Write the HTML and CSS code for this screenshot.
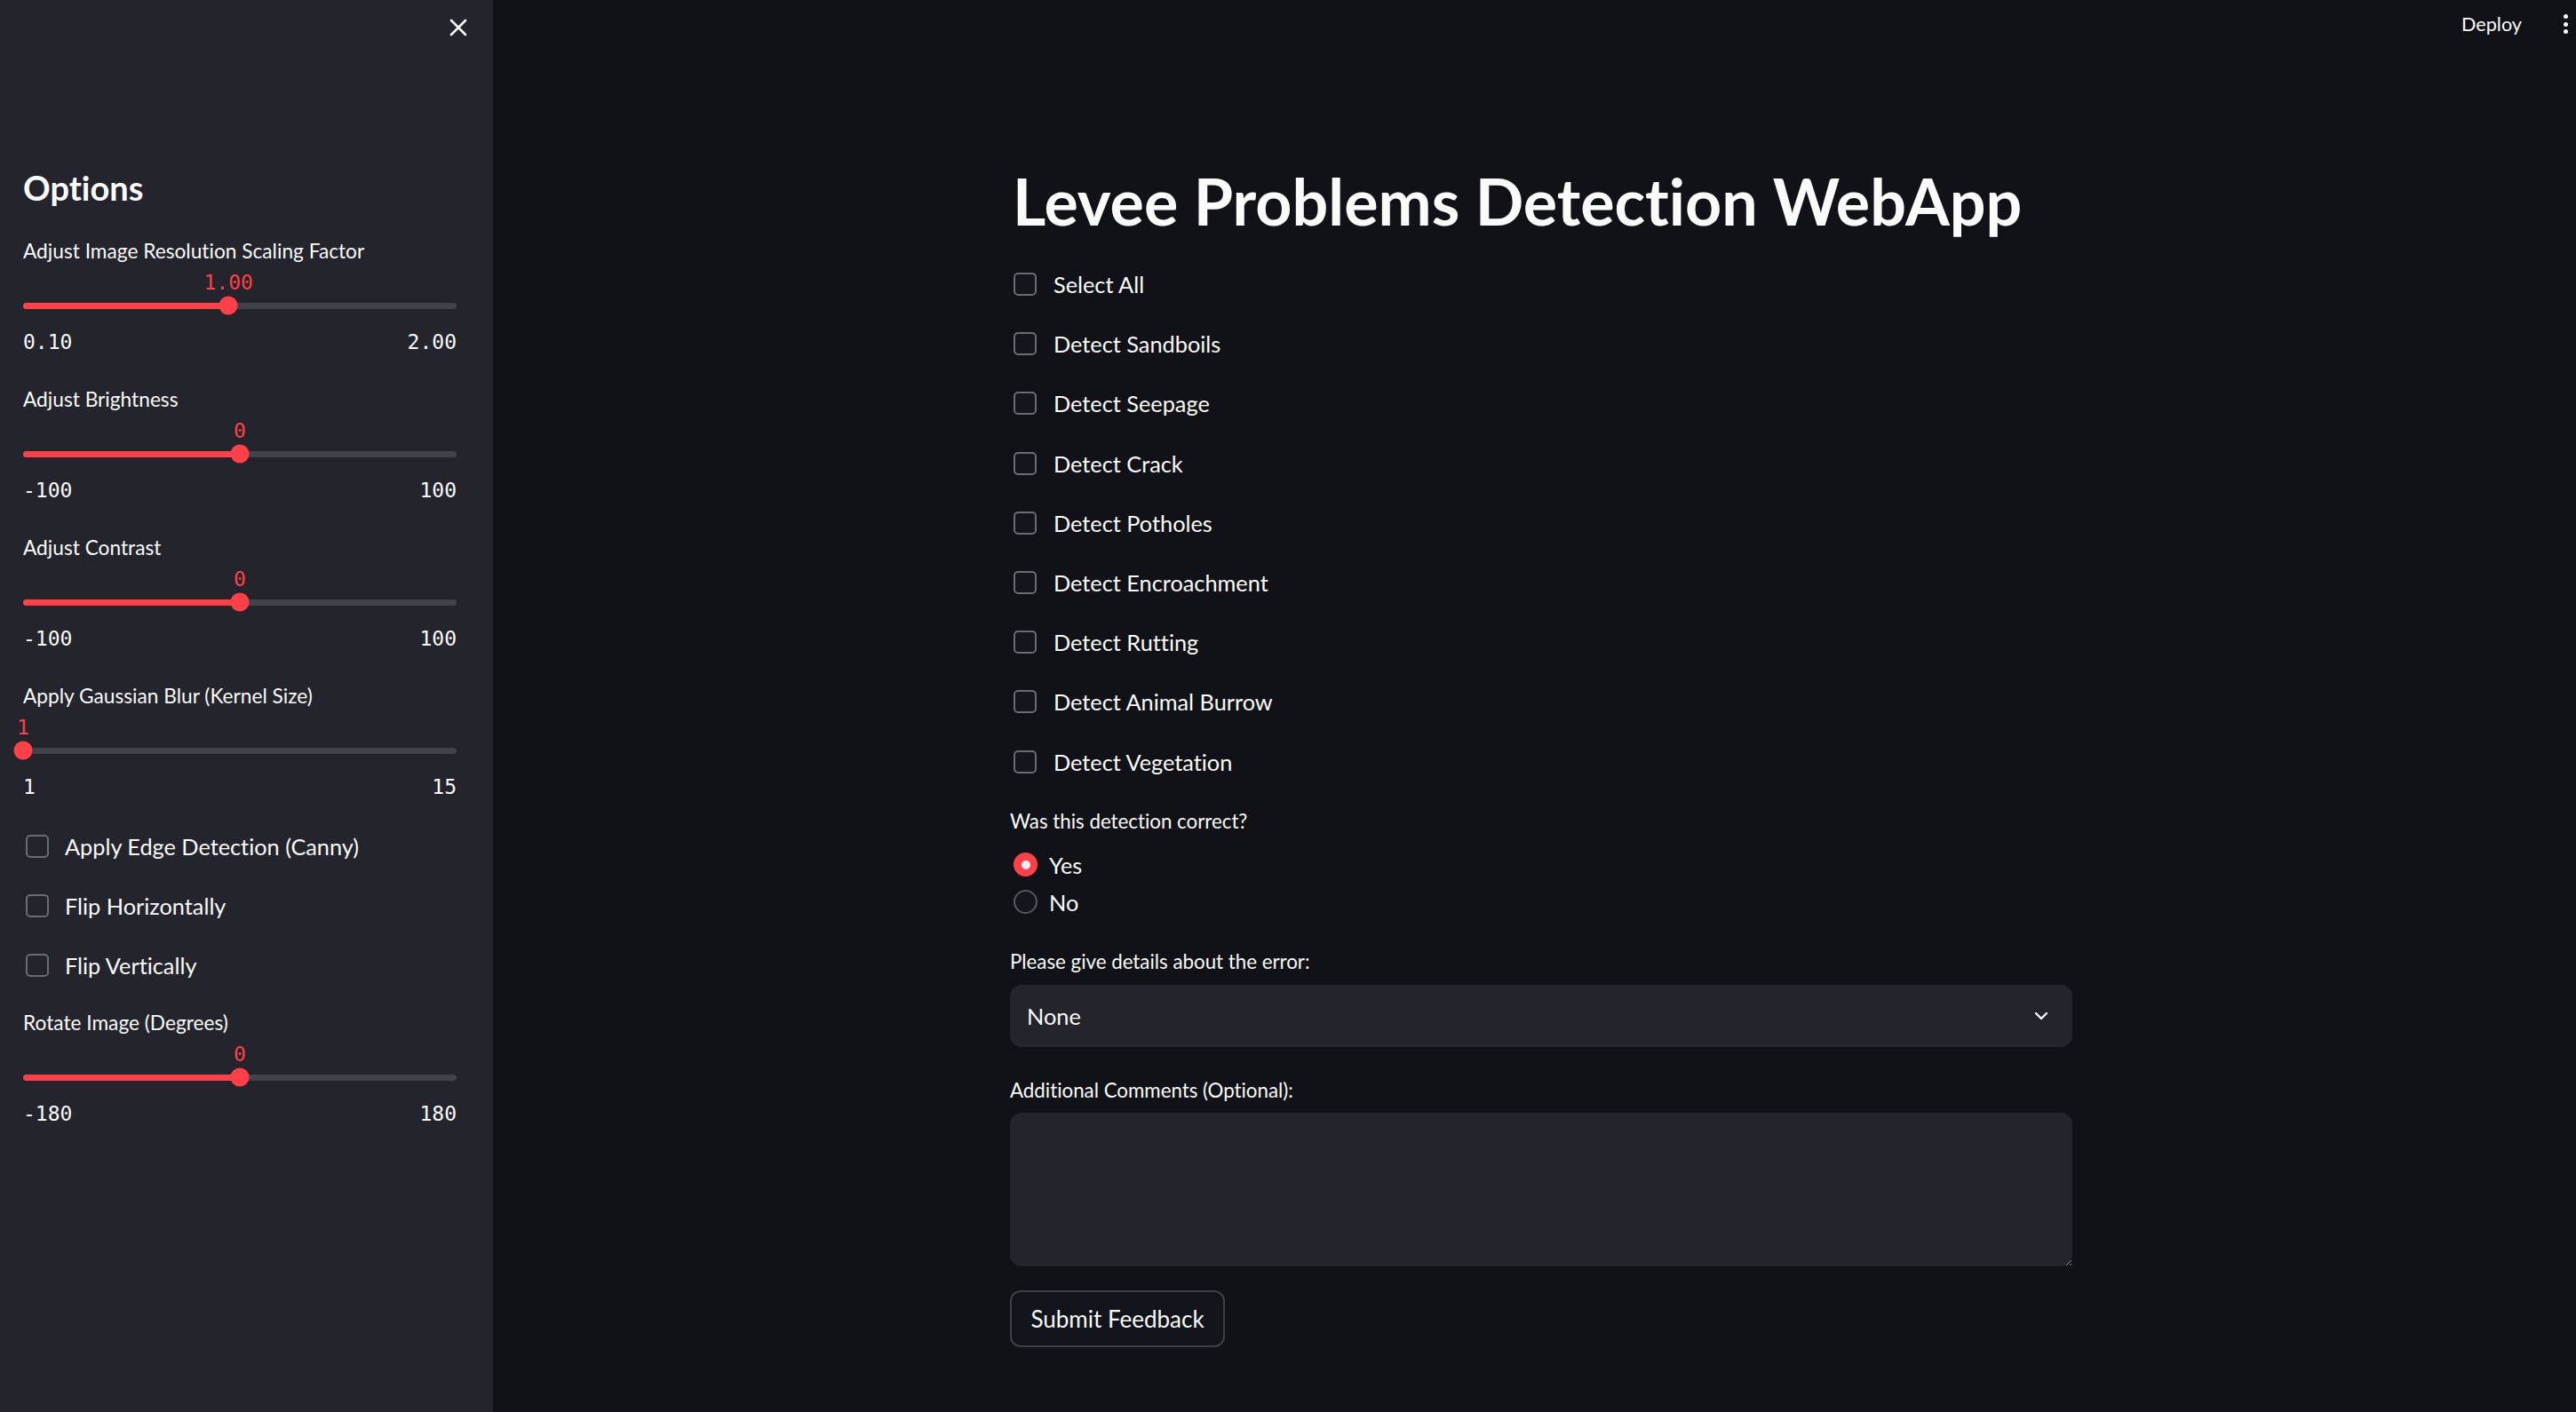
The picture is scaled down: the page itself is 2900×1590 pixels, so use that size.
FILE: index.html
```html
<!DOCTYPE html>
<html lang="en">
<head>
<meta charset="utf-8">
<title>Levee Problems Detection WebApp</title>
<link rel="stylesheet" href="styles.css">
</head>
<body>
<div class="app">
  <aside class="sidebar">
    <div class="side-head">
      <svg class="close-icon" width="20" height="20" viewBox="0 0 20 20"><path d="M2 2 L18 18 M18 2 L2 18" stroke="#fafafa" stroke-width="2.6" stroke-linecap="round" fill="none"/></svg>
    </div>
    <div class="side-body">
      <h2 class="side-title">Options</h2>

      <div class="slider">
        <div class="field-label">Adjust Image Resolution Scaling Factor</div>
        <div class="slider-value"><span class="value-text" style="left:47.37%">1.00</span></div>
        <div class="track-wrap"><div class="track"><div class="fill" style="width:47.37%"></div><div class="thumb" style="left:47.37%"></div></div></div>
        <div class="ticks"><span>0.10</span><span>2.00</span></div>
      </div>

      <div class="slider">
        <div class="field-label">Adjust Brightness</div>
        <div class="slider-value"><span class="value-text" style="left:50%">0</span></div>
        <div class="track-wrap"><div class="track"><div class="fill" style="width:50%"></div><div class="thumb" style="left:50%"></div></div></div>
        <div class="ticks"><span>-100</span><span>100</span></div>
      </div>

      <div class="slider">
        <div class="field-label">Adjust Contrast</div>
        <div class="slider-value"><span class="value-text" style="left:50%">0</span></div>
        <div class="track-wrap"><div class="track"><div class="fill" style="width:50%"></div><div class="thumb" style="left:50%"></div></div></div>
        <div class="ticks"><span>-100</span><span>100</span></div>
      </div>

      <div class="slider">
        <div class="field-label">Apply Gaussian Blur (Kernel Size)</div>
        <div class="slider-value"><span class="value-text" style="left:0%">1</span></div>
        <div class="track-wrap"><div class="track"><div class="fill" style="width:0%"></div><div class="thumb" style="left:0%"></div></div></div>
        <div class="ticks"><span>1</span><span>15</span></div>
      </div>

      <div class="side-checks">
        <label class="check side-check"><span class="box"></span><span class="check-text">Apply Edge Detection (Canny)</span></label>
        <label class="check side-check"><span class="box"></span><span class="check-text">Flip Horizontally</span></label>
        <label class="check side-check"><span class="box"></span><span class="check-text">Flip Vertically</span></label>
      </div>

      <div class="slider">
        <div class="field-label">Rotate Image (Degrees)</div>
        <div class="slider-value"><span class="value-text" style="left:50%">0</span></div>
        <div class="track-wrap"><div class="track"><div class="fill" style="width:50%"></div><div class="thumb" style="left:50%"></div></div></div>
        <div class="ticks"><span>-180</span><span>180</span></div>
      </div>
    </div>
  </aside>

  <main class="main">
    <header class="topbar">
      <span class="deploy">Deploy</span>
      <span class="kebab"><i></i><i></i><i></i></span>
    </header>
    <div class="content">
      <div class="block">
        <h1 class="title">Levee Problems Detection WebApp</h1>

        <div class="checks">
          <label class="check main-check"><span class="box"></span><span class="check-text">Select All</span></label>
          <label class="check main-check"><span class="box"></span><span class="check-text">Detect Sandboils</span></label>
          <label class="check main-check"><span class="box"></span><span class="check-text">Detect Seepage</span></label>
          <label class="check main-check"><span class="box"></span><span class="check-text">Detect Crack</span></label>
          <label class="check main-check"><span class="box"></span><span class="check-text">Detect Potholes</span></label>
          <label class="check main-check"><span class="box"></span><span class="check-text">Detect Encroachment</span></label>
          <label class="check main-check"><span class="box"></span><span class="check-text">Detect Rutting</span></label>
          <label class="check main-check"><span class="box"></span><span class="check-text">Detect Animal Burrow</span></label>
          <label class="check main-check"><span class="box"></span><span class="check-text">Detect Vegetation</span></label>
        </div>

        <div class="field-label main-label">Was this detection correct?</div>
        <div class="radios">
          <label class="radio"><span class="dot on"></span><span class="radio-text">Yes</span></label>
          <label class="radio"><span class="dot"></span><span class="radio-text">No</span></label>
        </div>

        <div class="field-label main-label select-label">Please give details about the error:</div>
        <div class="select">
          <span class="select-text">None</span>
          <svg class="chevron" width="16" height="10" viewBox="0 0 16 10"><path d="M2 2 L8 8 L14 2" stroke="#fafafa" stroke-width="2.4" fill="none" stroke-linecap="round" stroke-linejoin="round"/></svg>
        </div>

        <div class="field-label main-label comments-label">Additional Comments (Optional):</div>
        <textarea class="comments"></textarea>

        <button class="submit" type="button">Submit Feedback</button>
      </div>
    </div>
  </main>
</div>
</body>
</html>
```
FILE: styles.css
```css
* { box-sizing: border-box; }

html, body {
  margin: 0;
  padding: 0;
  height: 100%;
}

body {
  background: #111217;
  color: #fafafa;
  font-family: "Lato", "Noto Sans", sans-serif;
  font-variant-ligatures: none;
  overflow: hidden;
}

.app {
  display: flex;
  height: 1590px;
}

/* ---------- Sidebar ---------- */
.sidebar {
  width: 555px;
  flex: 0 0 555px;
  background: #23242c;
  height: 100%;
}

.side-head {
  height: 62px;
  display: flex;
  justify-content: flex-end;
  align-items: center;
  padding-right: 29px;
}

.close-icon { display: block; }

.side-body {
  padding: 0 41px 0 26px;
}

.side-title {
  margin: 124px 0 32px;
  font-size: 38px;
  font-weight: 700;
  line-height: 50px;
  height: 50px;
}

.field-label {
  font-size: 22.7px;
  line-height: 30px;
  height: 30px;
  white-space: nowrap;
}

.slider {
  margin-bottom: 37px;
}

.slider-value {
  position: relative;
  height: 24px;
  margin-top: 8px;
}

.value-text {
  position: absolute;
  top: 0;
  transform: translateX(-50%);
  font-family: "DejaVu Sans Mono", "Liberation Mono", monospace;
  font-size: 23px;
  line-height: 24px;
  color: #ff4048;
}

.track-wrap {
  height: 20px;
  margin-top: 4px;
  display: flex;
  align-items: center;
}

.track {
  position: relative;
  width: 100%;
  height: 7px;
  border-radius: 4px;
  background: #41424b;
}

.fill {
  height: 100%;
  border-radius: 4px;
  background: #ff4048;
}

.thumb {
  position: absolute;
  top: 50%;
  width: 21px;
  height: 21px;
  border-radius: 50%;
  background: #ff4048;
  transform: translate(-50%, -50%);
}

.ticks {
  display: flex;
  justify-content: space-between;
  height: 26px;
  margin-top: 18px;
  font-family: "DejaVu Sans Mono", "Liberation Mono", monospace;
  font-size: 23px;
  line-height: 26px;
}

/* ---------- Checkboxes ---------- */
.check {
  display: flex;
  align-items: center;
  height: 34px;
  margin-bottom: 33px;
  font-size: 25.3px;
  white-space: nowrap;
}

.box {
  flex: 0 0 26px;
  width: 26px;
  height: 26px;
  border: 2px solid #6b6c73;
  border-radius: 5px;
  background: transparent;
}

.side-check .box { margin-left: 3px; margin-right: 18px; }
.side-checks { margin-bottom: 5px; }

.main-check { margin-bottom: 33.2px; }
.main-check .box { margin-left: 4px; margin-right: 19px; background: #14161d; }

/* ---------- Main ---------- */
.main {
  flex: 1;
  display: flex;
  flex-direction: column;
  min-width: 0;
}

.topbar {
  height: 56px;
  display: flex;
  justify-content: flex-end;
  align-items: center;
  padding-right: 7px;
}

.deploy {
  font-size: 21.6px;
  line-height: 30px;
  margin-right: 44px;
  margin-top: -3px;
}

.kebab {
  display: flex;
  flex-direction: column;
  align-items: center;
  gap: 3.5px;
  width: 10px;
  margin-top: -2px;
}

.kebab i {
  display: block;
  width: 5px;
  height: 5px;
  border-radius: 50%;
  background: #fafafa;
}

.content {
  display: flex;
  justify-content: center;
  padding-left: 15px;
  padding-top: 125px;
}

.block {
  width: 1196px;
}

.title {
  margin: 0 0 32px 3px;
  font-size: 71.8px;
  font-weight: 700;
  line-height: 90px;
  height: 90px;
  letter-spacing: 0;
  white-space: nowrap;
}

.main-label {
  font-size: 22.3px;
  height: 34px;
  line-height: 34px;
}

.radios {
  margin-top: 15px;
  display: flex;
  flex-direction: column;
  gap: 8px;
}

.radio {
  display: flex;
  align-items: center;
  height: 34px;
  font-size: 25.3px;
}

.dot {
  flex: 0 0 27px;
  width: 27px;
  height: 27px;
  margin-left: 4px;
  margin-right: 13px;
  border-radius: 50%;
  border: 2px solid #55565e;
  background: #14161d;
  display: flex;
  align-items: center;
  justify-content: center;
}

.dot.on {
  background: #ff4048;
  border-color: #ff4048;
}

.dot.on::after {
  content: "";
  width: 10px;
  height: 10px;
  border-radius: 50%;
  background: #f0f0f4;
}

.select-label {
  margin-top: 35px;
  height: 30px;
  line-height: 30px;
}

.select {
  margin-top: 11px;
  height: 70px;
  border-radius: 13px;
  background: #23242c;
  display: flex;
  align-items: center;
  justify-content: space-between;
  padding: 0 27px 0 19px;
}

.select-text {
  font-size: 25.3px;
}

.chevron { display: block; }

.comments-label {
  margin-top: 34px;
  height: 30px;
  line-height: 30px;
}

.comments {
  display: block;
  width: 100%;
  height: 173px;
  margin-top: 10px;
  border: none;
  border-radius: 13px;
  background: #23242c;
  color: #fafafa;
  resize: vertical;
  outline: none;
  font-family: inherit;
  font-size: 25.3px;
  padding: 16px 19px;
}

.submit {
  display: block;
  margin-top: 27px;
  width: 242px;
  height: 64px;
  border: 2px solid #3e4047;
  border-radius: 12px;
  background: #12141b;
  color: #fafafa;
  font-family: inherit;
  font-size: 26px;
  padding: 0;
}
```
